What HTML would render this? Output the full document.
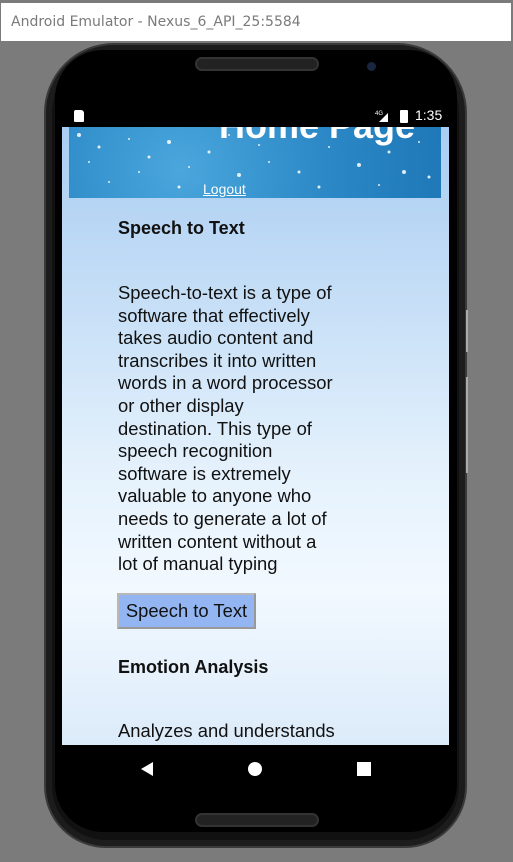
<!DOCTYPE html>
<html><head><meta charset="utf-8"><style>
*{margin:0;padding:0;box-sizing:border-box}
body{width:513px;height:862px;overflow:hidden;background:#7b7b7b;font-family:"Liberation Sans",sans-serif;position:relative}
.title{position:absolute;left:1px;top:3px;width:510px;height:38px;background:#fff;color:#7a7a7a;font-family:"DejaVu Sans","Liberation Sans",sans-serif;font-size:14px;line-height:38px;padding-left:10px}
.phone{position:absolute;left:44px;top:43px;width:423px;height:805px;background:#111;border-radius:70px 70px 62px 62px;border:2px solid #3a3a3a;box-shadow:inset 0 0 0 6px #1c1c1c}
.inner{position:absolute;left:55px;top:50px;width:402px;height:782px;background:#000;border-radius:48px}
.spk{position:absolute;left:195px;width:124px;height:14px;border-radius:7px;background:#222;border:2px solid #333}
.screen{position:absolute;left:62px;top:127px;width:387px;height:618px;overflow:hidden;background:linear-gradient(180deg,#a9cdf2 0%,#c8e0f7 30%,#e4f1fc 55%,#f2f9ff 75%,#dcebfa 100%)}
.status{position:absolute;left:62px;top:105px;width:387px;height:22px;background:#000;color:#fff}
.banner{position:absolute;left:7px;top:0;width:372px;height:71px;background:radial-gradient(circle at 30% 60%,#4aa6dc,#2a86c4 60%,#1f78b8);overflow:hidden}
.h{position:absolute;left:150px;top:-22px;color:#fff;font-weight:bold;font-size:36px;white-space:nowrap}
.lo{position:absolute;left:134px;top:54px;color:#fff;font-size:14px;text-decoration:underline}
.c{position:absolute;left:56px;color:#111;white-space:nowrap}
.hd{font-weight:bold;font-size:18px}
.p{font-size:18.4px;line-height:22.6px}
.btn{position:absolute;left:55px;top:466px;width:139px;height:36px;background:#93b6f2;border:2px solid #b8b8b8;border-right-color:#999;border-bottom-color:#999;font-size:18.4px;line-height:32px;text-align:center;color:#111}
.nav{position:absolute;left:62px;top:745px;width:387px;height:47px;background:#000}
</style></head><body>
<div class="title">Android Emulator - Nexus_6_API_25:5584</div>
<div class="phone"></div>
<div class="inner"></div>
<div class="spk" style="top:57px"></div>
<div class="spk" style="top:813px"></div>
<div style="position:absolute;left:367px;top:62px;width:9px;height:9px;border-radius:50%;background:#1a2540"></div>
<div style="position:absolute;left:466px;top:310px;width:2px;height:42px;background:#aaa"></div>
<div style="position:absolute;left:466px;top:377px;width:2px;height:96px;background:#aaa"></div>
<div class="status">
 <div style="position:absolute;left:12px;top:5px;width:10px;height:12px;background:#fff;border-radius:2px 3px 1px 1px"></div>
 <svg style="position:absolute;left:313px;top:4px" width="14" height="14"><text x="0" y="6" font-size="6" fill="#fff" font-family="Liberation Sans">4G</text><polygon points="4,13 13,13 13,4" fill="#fff"/></svg>
 <div style="position:absolute;left:338px;top:5px;width:8px;height:13px;background:#fff;border-radius:1px"></div>
 <div style="position:absolute;left:353px;top:2px;font-size:14px">1:35</div>
</div>
<div class="screen">
 <div class="banner">
  <svg width="372" height="71" style="position:absolute;left:0;top:0">
   <g fill="#fff" opacity=".85">
    <circle cx="10" cy="8" r="2"/><circle cx="30" cy="20" r="1.5"/><circle cx="60" cy="12" r="1"/><circle cx="80" cy="30" r="1.5"/><circle cx="100" cy="15" r="2"/><circle cx="120" cy="40" r="1"/><circle cx="140" cy="25" r="1.5"/><circle cx="170" cy="48" r="2"/><circle cx="200" cy="35" r="1"/><circle cx="230" cy="45" r="1.5"/><circle cx="260" cy="20" r="1"/><circle cx="290" cy="38" r="2"/><circle cx="320" cy="25" r="1.5"/><circle cx="350" cy="15" r="1"/><circle cx="360" cy="50" r="1.5"/><circle cx="40" cy="55" r="1"/><circle cx="110" cy="60" r="1.5"/><circle cx="190" cy="18" r="1"/><circle cx="250" cy="60" r="1.5"/><circle cx="310" cy="58" r="1"/><circle cx="70" cy="45" r="1"/><circle cx="160" cy="8" r="1"/><circle cx="335" cy="45" r="2"/><circle cx="20" cy="35" r="1"/>
   </g></svg>
  <div class="h">Home Page</div>
  <div class="lo">Logout</div>
 </div>
 <div class="c hd" style="top:91px">Speech to Text</div>
 <div class="c p" style="top:155px">Speech-to-text is a type of<br>software that effectively<br>takes audio content and<br>transcribes it into written<br>words in a word processor<br>or other display<br>destination. This type of<br>speech recognition<br>software is extremely<br>valuable to anyone who<br>needs to generate a lot of<br>written content without a<br>lot of manual typing</div>
 <div class="btn">Speech to Text</div>
 <div class="c hd" style="top:530px">Emotion Analysis</div>
 <div class="c p" style="top:593px">Analyzes and understands</div>
</div>
<div class="nav">
 <svg width="387" height="47"><polygon points="79,24 91,17 91,31" fill="#fff"/><circle cx="193" cy="24" r="7" fill="#fff"/><rect x="295" y="17" width="14" height="14" fill="#fff"/></svg>
</div>
</body></html>
